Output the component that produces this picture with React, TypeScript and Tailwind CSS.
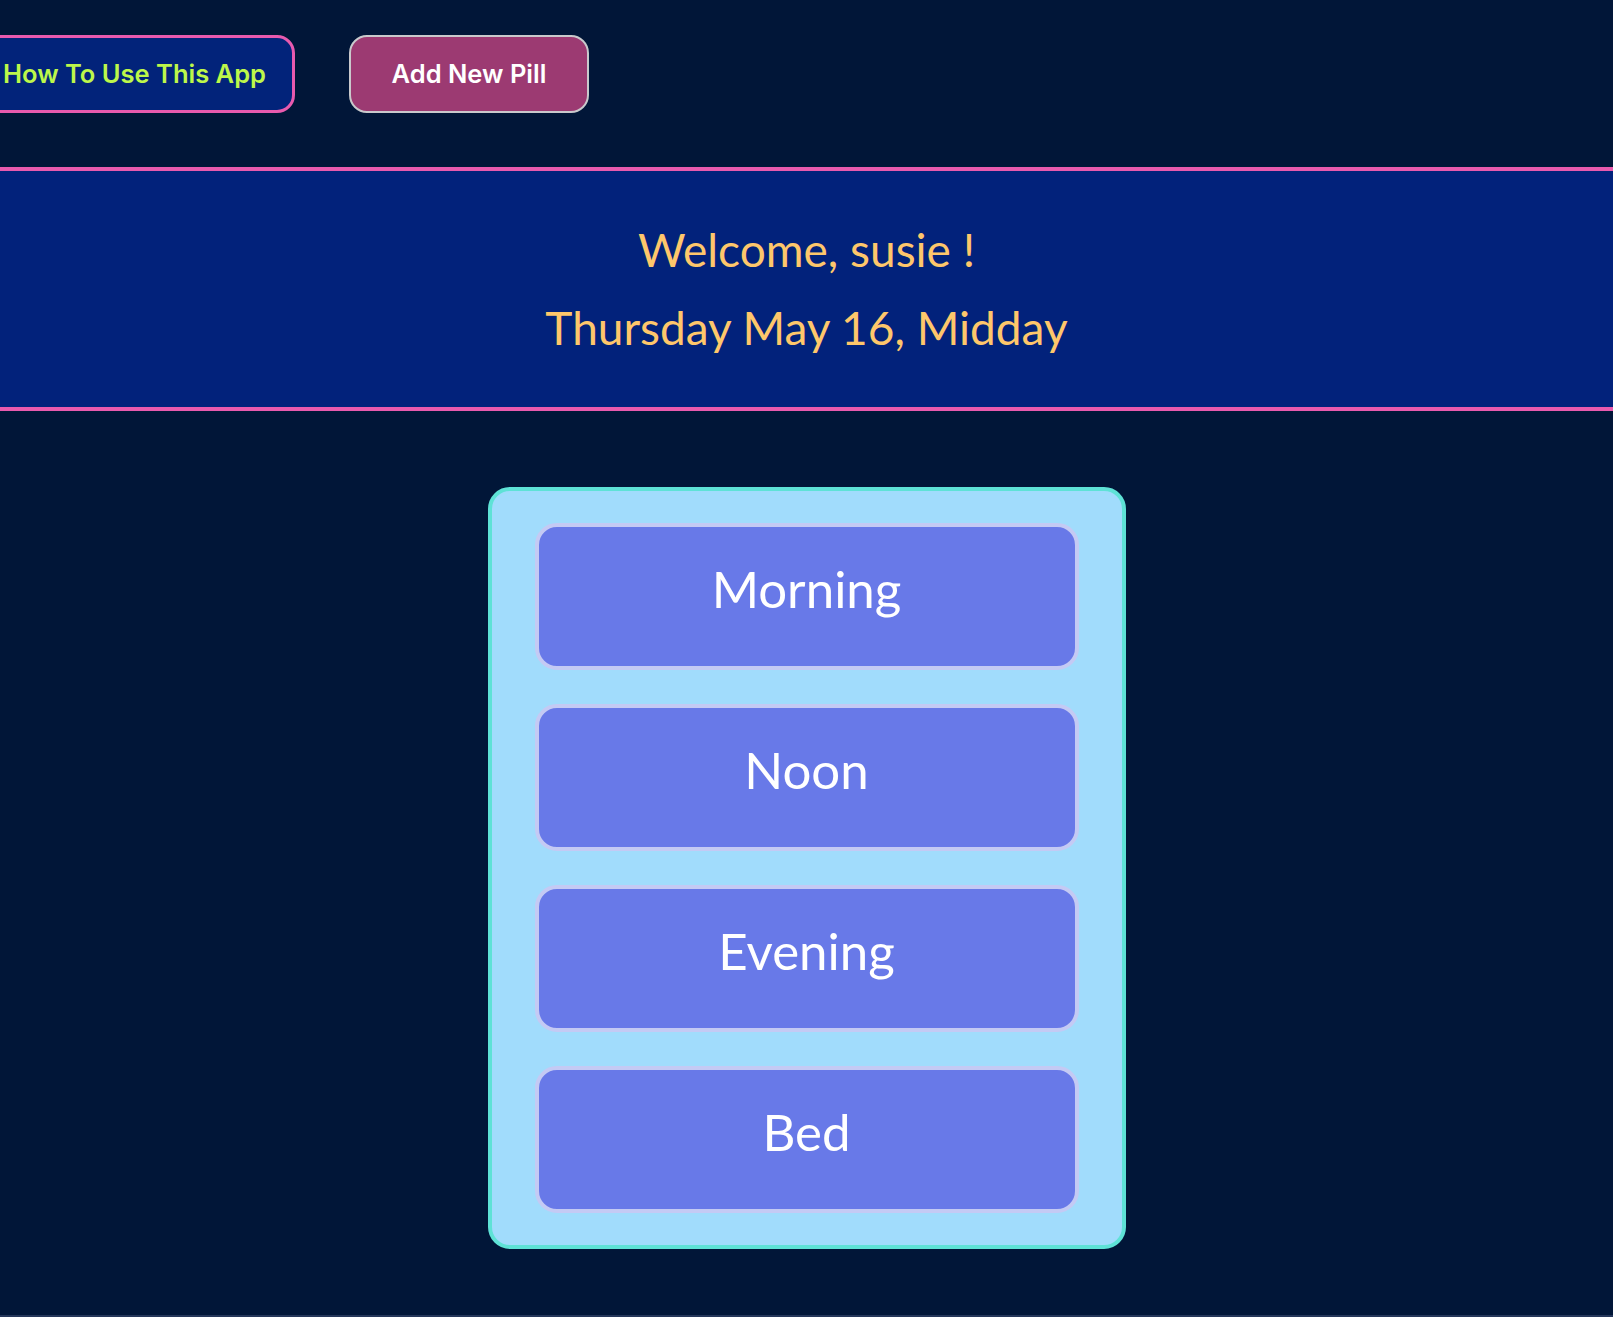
const slots = ["Morning", "Noon", "Evening", "Bed"];

const TopBar = () => {
  return (
    <div className="flex h-[167px] items-start gap-[54px] pt-[35px]">
      <button className="-ml-[26px] h-[78px] rounded-[18px] border-[3px] border-[#e85aae] bg-[#02237a] px-[26px] text-[25.5px] font-semibold text-[#bdf74a] [font-family:Inter,sans-serif]">
        How To Use This App
      </button>
      <button className="h-[78px] w-[240px] rounded-[18px] border-2 border-[#c9c9cc] bg-[#9c3a72] text-[25.5px] font-semibold text-white [font-family:Inter,sans-serif]">
        Add New Pill
      </button>
    </div>
  );
};

const Greeting = () => {
  return (
    <div className="border-y-4 border-[#e85aae] bg-[#02227b] py-[40px] text-center text-[#fec76b] [font-family:Lato,sans-serif]">
      <p className="text-[46px] leading-[78px]">Welcome, susie !</p>
      <p className="text-[46px] leading-[78px]">Thursday May 16, Midday</p>
    </div>
  );
};

export default function App() {
  return (
    <div className="min-h-[1317px] border-b-2 border-[#24365a] bg-[#011638]">
      <TopBar />
      <Greeting />
      <div className="flex justify-center pt-[76px]">
        <div className="flex w-[638px] flex-col gap-[34px] rounded-[22px] border-4 border-[#5ee2d6] bg-[#a1dcfc] px-[43px] py-[32px]">
          {slots.map((slot) => (
            <button
              key={slot}
              className="flex h-[147px] items-center justify-center rounded-[22px] border-4 border-[#c4caf4] bg-[#6879e8] pb-[14px] text-[51px] text-white [font-family:Lato,sans-serif]"
            >
              {slot}
            </button>
          ))}
        </div>
      </div>
    </div>
  );
}
